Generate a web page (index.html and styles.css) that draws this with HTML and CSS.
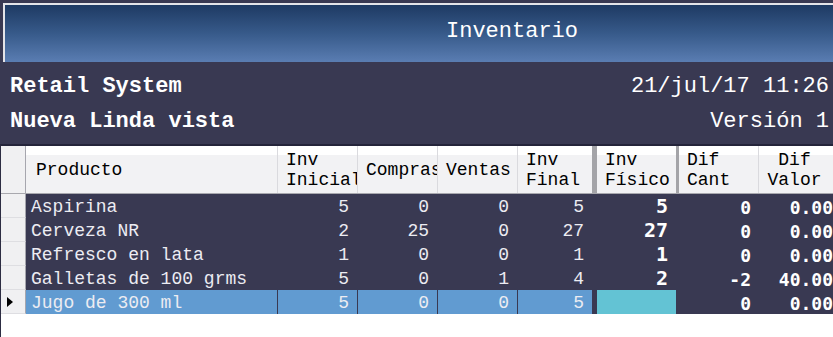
FILE: index.html
```html
<!DOCTYPE html>
<html lang="es">
<head>
<meta charset="utf-8">
<title>Inventario</title>
<link rel="stylesheet" href="styles.css">
</head>
<body>
<div class="app">
  <div class="titlebar"><span class="title">Inventario</span></div>
  <div class="info">
    <div class="info-line"><span class="strong">Retail System</span><span>21/jul/17 11:26</span></div>
    <div class="info-line"><span class="strong">Nueva Linda vista</span><span>Versión 1</span></div>
  </div>
  <div class="grid">
    <div class="row head">
      <div class="rh"></div>
      <div class="hc first">Producto</div>
      <div class="hc">Inv<br>Inicial</div>
      <div class="hc">Compras</div>
      <div class="hc">Ventas</div>
      <div class="hc">Inv<br>Final</div>
      <div class="hc fis">Inv<br>Físico</div>
      <div class="hc dc">Dif<br>Cant</div>
      <div class="hc dv">Dif<br>Valor</div>
    </div>
    <div class="row">
      <div class="rh"></div>
      <div class="c name">Aspirina</div>
      <div class="c">5</div><div class="c">0</div><div class="c">0</div><div class="c">5</div>
      <div class="c fis">5</div><div class="c dc">0</div><div class="c dv">0.00</div>
    </div>
    <div class="row">
      <div class="rh"></div>
      <div class="c name">Cerveza NR</div>
      <div class="c">2</div><div class="c">25</div><div class="c">0</div><div class="c">27</div>
      <div class="c fis">27</div><div class="c dc">0</div><div class="c dv">0.00</div>
    </div>
    <div class="row">
      <div class="rh"></div>
      <div class="c name">Refresco en lata</div>
      <div class="c">1</div><div class="c">0</div><div class="c">0</div><div class="c">1</div>
      <div class="c fis">1</div><div class="c dc">0</div><div class="c dv">0.00</div>
    </div>
    <div class="row">
      <div class="rh"></div>
      <div class="c name">Galletas de 100 grms</div>
      <div class="c">5</div><div class="c">0</div><div class="c">1</div><div class="c">4</div>
      <div class="c fis">2</div><div class="c dc">-2</div><div class="c dv">40.00</div>
    </div>
    <div class="row sel">
      <div class="rh"><span class="arrow"></span></div>
      <div class="c name">Jugo de 300 ml</div>
      <div class="c">5</div><div class="c">0</div><div class="c">0</div><div class="c">5</div>
      <div class="c fis edit"></div><div class="c dc">0</div><div class="c dv">0.00</div>
    </div>
  </div>
</div>
</body>
</html>
```

FILE: styles.css
```css
html, body {
  margin: 0;
  padding: 0;
}
body {
  background: #393952;
  width: 833px;
  height: 337px;
  overflow: hidden;
}
.app {
  display: flex;
  flex-direction: column;
  width: 833px;
  height: 337px;
  background: #393952;
  font-family: "Liberation Mono", "Courier New", monospace;
}
.titlebar {
  margin: 3px 0 0 3px;
  height: 53px;
  border-top: 2px solid #e4e4e8;
  border-left: 2px solid #e4e4e8;
  background: linear-gradient(to bottom, #1e3a63 0%, #375a8a 50%, #5a7db2 100%);
  display: flex;
  align-items: center;
  justify-content: center;
  padding: 0 0 4px 186px;
  box-sizing: content-box;
  flex: none;
}
.title {
  color: #ffffff;
  font-size: 22px;
  line-height: 26px;
}
.info {
  padding: 7px 4px 5px 10px;
  color: #ffffff;
  font-size: 22px;
  flex: none;
}
.info-line {
  display: flex;
  justify-content: space-between;
  line-height: 35px;
  height: 35px;
}
.strong {
  font-weight: bold;
}
.grid {
  flex: 1;
  background: #ffffff;
  border-top: 2px solid #24243a;
  border-left: 1px solid #2c2c42;
  overflow: hidden;
}
.row {
  display: grid;
  grid-template-columns: 25px 251px 80px 80px 80px 75px 84px 82px 80px;
  height: 24px;
  background: #393952;
  color: #ececf2;
  font-size: 18px;
  line-height: 24px;
  width: 837px;
}
.row.head {
  height: 47px;
  border-bottom: 1px solid #a8a8ae;
  background: linear-gradient(to bottom, #ffffff 0, #ffffff 9px, #f2f2f4 9px, #f2f2f4 100%);
  color: #000000;
  line-height: 20px;
}
.rh {
  background: #f0f0f2;
  border-right: 1px solid #a6a6ae;
  border-bottom: 1px solid #dedee2;
  box-sizing: border-box;
  display: flex;
  align-items: center;
  padding-left: 6px;
}
.row.head .rh {
  border-bottom: none;
}
.hc {
  box-sizing: border-box;
  border-left: 1px solid #dadade;
  padding-left: 8px;
  display: flex;
  flex-direction: column;
  justify-content: center;
  white-space: nowrap;
  overflow: hidden;
}
.hc.first {
  border-left: none;
  padding-left: 10px;
}
.hc.fis {
  border-left: 5px solid #a4a4a8;
  padding-left: 8px;
}
.hc.dc {
  border-left: 3px solid #a4a4a8;
  padding-left: 8px;
}
.hc.dv {
  text-align: center;
  padding: 0 8px 0 0;
}
.c {
  box-sizing: border-box;
  border-left: 1px solid #393952;
  text-align: right;
  padding-right: 8px;
  white-space: nowrap;
  overflow: hidden;
  padding-top: 3px;
  line-height: 21px;
}
.c.name {
  border-left: none;
  text-align: left;
  padding-left: 5px;
}
.c.fis {
  border-left: 5px solid #393952;
  font-family: "DejaVu Sans Mono", monospace;
  font-weight: bold;
  font-size: 20px;
  color: #ffffff;
  padding-top: 1px;
  line-height: 23px;
}
.c.dc {
  border-left: 3px solid #393952;
  font-family: "DejaVu Sans Mono", monospace;
  font-weight: bold;
  font-size: 18px;
  color: #ffffff;
  padding-right: 7px;
}
.c.dv {
  font-family: "DejaVu Sans Mono", monospace;
  font-weight: bold;
  font-size: 18px;
  color: #ffffff;
  padding-right: 5px;
}
.row.sel .c {
  background: #619bd1;
}
.row.sel .c.dc,
.row.sel .c.dv {
  background: #393952;
}
.row.sel .c.edit {
  background: #63c3d4;
}
.arrow {
  width: 0;
  height: 0;
  border-top: 5px solid transparent;
  border-bottom: 5px solid transparent;
  border-left: 6px solid #000000;
}
```
